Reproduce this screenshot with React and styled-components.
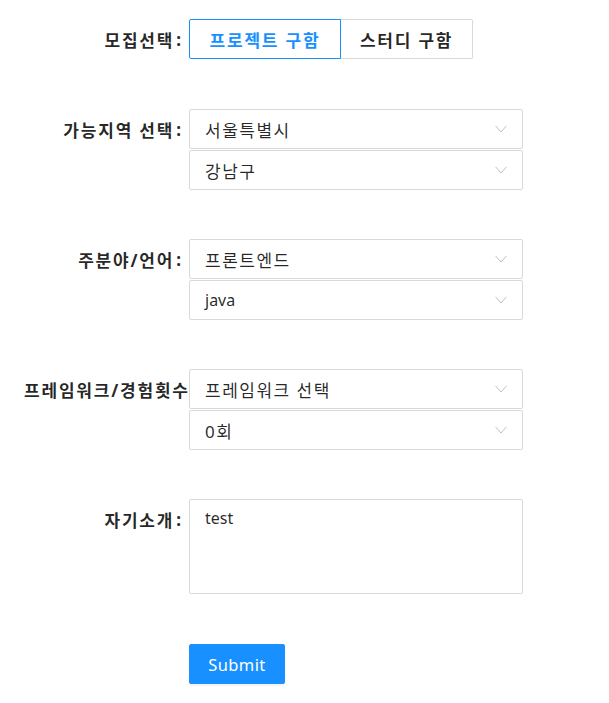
import React from "react";
import styled, { createGlobalStyle } from "styled-components";

const Global = createGlobalStyle`
  html, body { margin: 0; padding: 0; background: #fff; }
  body {
    font-family: "Noto Sans", "Noto Sans CJK KR", sans-serif;
    font-size: 16px;
    color: rgba(0, 0, 0, 0.85);
  }
  * { box-sizing: border-box; }
`;

const Form = styled.form`
  width: 501px;
  margin-left: 22px;
  padding-top: 19px;
`;

const FormItem = styled.div`
  display: grid;
  grid-template-columns: 167px 334px;
  margin-bottom: ${(p) => p.$mb ?? 50}px;
`;

const LabelCol = styled.div`
  text-align: right;
  overflow: hidden;
  white-space: nowrap;
`;

const Label = styled.label`
  display: inline-flex;
  align-items: center;
  height: 40px;
  padding-left: 2px;
  font-weight: 700;
  font-size: 17px;
  letter-spacing: 1.8px;
  color: rgba(0, 0, 0, 0.85);
  &::after {
    content: ":";
    margin: 0 8px 0 2px;
    letter-spacing: 0;
  }
`;

const Control = styled.div`
  display: flex;
  flex-direction: column;
  gap: 1px;
`;

const RadioGroup = styled.div`
  display: flex;
`;

const RadioButton = styled.button`
  height: 40px;
  padding: 0 ${(p) => p.$pad}px;
  background: #fff;
  font-family: inherit;
  font-size: 17px;
  font-weight: 700;
  letter-spacing: 1.8px;
  cursor: pointer;
  color: ${(p) => (p.$checked ? "#1890ff" : "rgba(0,0,0,0.85)")};
  border: 1px solid ${(p) => (p.$checked ? "#1890ff" : "#d9d9d9")};
  border-left-width: ${(p) => (p.$first ? 1 : 0)}px;
  border-radius: ${(p) => (p.$first ? "2px 0 0 2px" : "0 2px 2px 0")};
`;

const SelectBox = styled.div`
  position: relative;
  height: 40px;
  border: 1px solid #d9d9d9;
  border-radius: 2px;
  padding: 0 30px 0 15px;
  display: flex;
  align-items: center;
  font-size: ${(p) => (p.$latin ? 16 : 17)}px;
  letter-spacing: ${(p) => (p.$latin ? 0 : 1.5)}px;
  color: rgba(0, 0, 0, 0.85);
  background: #fff;
`;

const Arrow = styled.svg`
  position: absolute;
  right: 15px;
  top: 50%;
  margin-top: -4px;
  width: 12px;
  height: 8px;
`;

const TextArea = styled.textarea`
  height: 95px;
  border: 1px solid #d9d9d9;
  border-radius: 2px;
  padding: 6px 15px;
  font-family: inherit;
  font-size: 16px;
  line-height: 1.5715;
  color: rgba(0, 0, 0, 0.85);
  resize: none;
  outline: none;
`;

const SubmitButton = styled.button`
  width: 96px;
  height: 40px;
  background: #1890ff;
  border: 1px solid #1890ff;
  border-radius: 2px;
  color: #fff;
  font-family: inherit;
  font-size: 16.5px;
  letter-spacing: 0.4px;
  box-shadow: 0 2px 0 rgba(0, 0, 0, 0.045);
  cursor: pointer;
`;

const Select = ({ children, latin }) => (
  <SelectBox $latin={latin}>
    {children}
    <Arrow viewBox="0 0 12 8" fill="none">
      <path d="M0.5 0.8 L6 7 L11.5 0.8" stroke="#bfbfbf" strokeWidth="1" />
    </Arrow>
  </SelectBox>
);

export default function App() {
  return (
    <>
      <Global />
      <Form onSubmit={(e) => e.preventDefault()}>
        <FormItem>
          <LabelCol>
            <Label>모집선택</Label>
          </LabelCol>
          <RadioGroup>
            <RadioButton type="button" $first $checked $pad={19.5}>
              프로젝트 구함
            </RadioButton>
            <RadioButton type="button" $pad={19}>
              스터디 구함
            </RadioButton>
          </RadioGroup>
        </FormItem>

        <FormItem $mb={49}>
          <LabelCol>
            <Label>가능지역 선택</Label>
          </LabelCol>
          <Control>
            <Select>서울특별시</Select>
            <Select>강남구</Select>
          </Control>
        </FormItem>

        <FormItem $mb={49}>
          <LabelCol>
            <Label>주분야/언어</Label>
          </LabelCol>
          <Control>
            <Select>프론트엔드</Select>
            <Select latin>java</Select>
          </Control>
        </FormItem>

        <FormItem $mb={49}>
          <LabelCol>
            <Label>프레임워크/경험횟수</Label>
          </LabelCol>
          <Control>
            <Select>프레임워크 선택</Select>
            <Select>0회</Select>
          </Control>
        </FormItem>

        <FormItem>
          <LabelCol>
            <Label>자기소개</Label>
          </LabelCol>
          <Control>
            <TextArea defaultValue="test" />
          </Control>
        </FormItem>

        <FormItem>
          <div />
          <div>
            <SubmitButton type="submit">Submit</SubmitButton>
          </div>
        </FormItem>
      </Form>
    </>
  );
}
